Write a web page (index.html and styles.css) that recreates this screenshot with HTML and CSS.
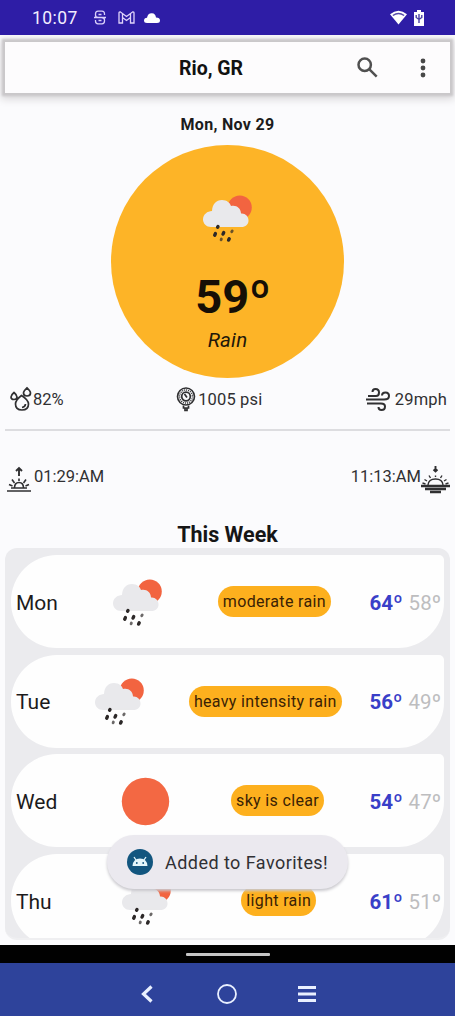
FILE: index.html
```html
<!DOCTYPE html>
<html lang="en">
<head>
<meta charset="utf-8">
<title>Weather</title>
<link rel="stylesheet" href="styles.css">
</head>
<body>
<svg class="defs" aria-hidden="true">
  <symbol id="rain" viewBox="0 0 50 48">
    <circle cx="36.8" cy="12.6" r="12" fill="#f26440"/>
    <path class="cloud" d="M8 32C3.500 32 0 28.500 0 24.500C0 19.500 4.500 16 9 16C9.500 9 13 5 19 5C24 5 27 8 28 11C33 9.500 38 13 38 18.500C42 18 45.500 21 45.500 25.500C45.500 29.500 42.500 32 38.500 32Z"/>
    <g stroke="#2d2928" stroke-width="3.400" stroke-linecap="round">
      <path d="M15 31.400l-.4 .8M12.400 38.600l-.7 1.600M20.700 37.600l-.7 1.500M26.200 43.800l-.6 1.300"/>
      <path stroke-width="2.800" opacity=".7" d="M29.200 36l-.5 .8M18.400 44l-.3 .9"/>
    </g>
  </symbol>
</svg>
<div class="phone">
  <header class="status">
    <span class="clock">10:07</span>
    <svg class="s-icon" viewBox="0 0 12 15"><path d="M10.500 5V4Q10.500 1.200 8 1.200H4Q1.500 1.200 1.500 4V5Q1.500 7.500 4.500 7.500H7.500Q10.500 7.500 10.500 10V11Q10.500 13.800 8 13.800H4Q1.500 13.800 1.500 11V10M0 7.500H12M4.500 4.500H7.500M4.500 10.500H7.500"/></svg>
    <svg class="m-icon" viewBox="0 0 17 13"><path d="M1 12V2Q1 .8 2.500 1L8.500 5.500L14.500 1Q16 .8 16 2V12H12.500V6.500L8.500 9.500L4.500 6.500V12ZM4.500 6.500V3M12.500 6.500V3"/></svg>
    <svg class="c-icon" viewBox="0 0 16 10"><path d="M3 10Q0 10 0 7.500Q0 5 3 4.700Q4 0 8 .3Q11.500 .5 12 4.500Q16 4.600 16 7.500Q16 10 13 10Z"/></svg>
    <span class="grow"></span>
    <svg class="wifi" viewBox="0 0 18 15"><path d="M0 4Q9-3.500 18 4L9 15Z" fill="#fff"/><path d="M3 5.400Q9 1 15 5.400" fill="none" stroke="#554aa8" stroke-width="1.500"/></svg>
    <svg class="battery" viewBox="0 0 10 16"><path d="M0 2H3V0H7V2H10V16H0Z" fill="#fff"/><path d="M5 13V4M2.200 5V7.500L5 9.500L7.800 7.500V5" fill="none" stroke="#4940a5" stroke-width="1.400"/></svg>
  </header>

  <div class="appbar">
    <h1 class="city">Rio, GR</h1>
    <svg class="search" viewBox="0 0 21 21"><circle cx="7.700" cy="7.700" r="6.200"/><path d="M12.200 12.200L19.700 19.700"/></svg>
    <svg class="dots" viewBox="0 0 6 20"><circle cx="3" cy="3" r="2.400"/><circle cx="3" cy="10" r="2.400"/><circle cx="3" cy="17" r="2.400"/></svg>
  </div>

  <main class="content">
    <p class="date">Mon, Nov 29</p>
    <section class="today">
      <svg class="today-icon"><use href="#rain"/></svg>
      <strong class="temp">59º</strong>
      <em class="summary">Rain</em>
    </section>

    <section class="stats">
      <div class="stat">
        <svg class="i-hum" viewBox="0 0 22 24"><path d="M11.500 8.500Q5.500 13 5.500 17Q5.500 23 12 23Q18.500 23 18.500 17Q18.500 13 11.500 8.500ZM17 .8Q13.500 4 13.500 6Q13.500 9 17 9Q20.500 9 20.500 6Q20.500 4 17 .8ZM4 5.500Q1 8 1 10Q1 12.500 4 12.500Q7 12.500 7 10Q7 8 4 5.500ZM15.500 17Q15.200 20 12 20.500"/></svg>
        <span class="v-hum">82%</span>
      </div>
      <div class="stat">
        <svg class="i-psi" viewBox="0 0 20 24"><circle cx="10" cy="9.500" r="8.500" stroke-width="1.600"/><circle cx="10" cy="9.500" r="6.500" stroke-width="1.500" stroke-dasharray="1 1"/><circle cx="10" cy="9.500" r="4.300"/><path d="M8.500 7L11 10.500M7.500 18.500V21H12.500V18.500M9 21V23.500H11V21" stroke-width="1.700"/></svg>
        <span class="v-psi">1005 psi</span>
      </div>
      <div class="stat">
        <svg class="i-wind" viewBox="0 0 24 24"><path d="M2 9H10Q13 9 13 5.500Q13 2 9.500 2Q6.500 2 6.500 5M0 12.500H18Q23 12.500 23 9Q23 5.500 19.500 5.500Q16 5.500 16 8.500M1 16.500H15Q19 16.500 19 19.500Q19 23 15.500 23Q12.500 23 12.500 20"/></svg>
        <span class="v-wind">29mph</span>
      </div>
    </section>
    <hr class="rule">
    <section class="sun">
      <div class="stat">
        <svg class="i-rise" viewBox="0 0 24 25"><path d="M12 9V1M9 4L12 1L15 4" stroke-width="1.900"/><path d="M0 24H24M4 21H20" stroke-width="1.400"/><path d="M7.500 21Q7.500 15.500 12 15.500Q16.500 15.500 16.500 21M12 14V11.500M7.500 16L5 12.500M16.500 16L19 12.500M5.500 19L2 17.500M18.500 19L22 17.500" stroke-width="1.600"/></svg>
        <span class="v-rise">01:29:AM</span>
      </div>
      <div class="stat">
        <span class="v-set">11:13:AM</span>
        <svg class="i-set" viewBox="0 0 29 28"><path d="M14.500 1V6M12.500 4.500L14.500 6.500L16.500 4.500" stroke-width="1.900"/><path d="M7 20Q7.500 14 14.500 14Q21.500 14 22 20M14.500 12V10.500M9.500 13L8 10.500M19.500 13L21 10.500M6 16L3.500 14.500M23 16L25.500 14.500M4.500 19L1.500 18M24.500 19L27.500 18" stroke-width="1.400"/><path d="M0 21H29M4 24H25M9 27H20" stroke-width="2.300"/></svg>
      </div>
    </section>

    <h2 class="week-title">This Week</h2>
    <section class="week">
      <article class="day"><span class="name">Mon</span><svg class="icon"><use href="#rain"/></svg><span class="pill">moderate rain</span><span class="range"><b class="hi">64º</b><span class="lo">58º</span></span></article>
      <article class="day"><span class="name">Tue</span><svg class="icon"><use href="#rain"/></svg><span class="pill">heavy intensity rain</span><span class="range"><b class="hi">56º</b><span class="lo">49º</span></span></article>
      <article class="day"><span class="name">Wed</span><svg class="icon" viewBox="0 0 50 48"><circle cx="25.500" cy="23.500" r="23.700" fill="#f36843"/></svg><span class="pill">sky is clear</span><span class="range"><b class="hi">54º</b><span class="lo">47º</span></span></article>
      <article class="day"><span class="name">Thu</span><svg class="icon"><use href="#rain"/></svg><span class="pill">light rain</span><span class="range"><b class="hi">61º</b><span class="lo">51º</span></span></article>
    </section>
  </main>

  <div class="gesture"><span class="handle"></span></div>
  <nav class="nav">
    <svg class="back" viewBox="0 0 12 18"><path d="M10.500 1.500L2.500 9L10.500 16.500"/></svg>
    <svg class="home" viewBox="0 0 20 20"><circle cx="10" cy="10" r="9"/></svg>
    <svg class="menu" viewBox="0 0 18 16"><path d="M0 1.500H18M0 8H18M0 14.500H18"/></svg>
  </nav>

  <div class="toast">
    <svg class="droid" viewBox="0 0 26 26"><circle cx="13" cy="13" r="13" fill="#12567f"/><path d="M5.500 17Q6 9.500 13 9.500Q20 9.500 20.500 17Z" fill="#e3f6fb"/><path d="M7 8L9 11M19 8L17 11" stroke="#e3f6fb" stroke-width="1.300"/><circle cx="9.800" cy="14" r=".9" fill="#12567f"/><circle cx="16.200" cy="14" r=".9" fill="#12567f"/></svg>
    <span class="toast-text">Added to Favorites!</span>
  </div>
</div>
</body>
</html>
```
FILE: styles.css
```css
* { box-sizing: border-box; }
body { margin: 0; font-family: Roboto, sans-serif; color: #1c1b1c; background: #fbfbfd; }
h1, h2, p { margin: 0; }
svg { display: block; flex: none; overflow: visible; }
.defs { position: absolute; width: 0; height: 0; }
.phone { position: relative; width: 455px; height: 1016px; overflow: hidden; display: flex; flex-direction: column; background: #fbfbfd; white-space: nowrap; }

.status { position: relative; z-index: 1; height: 35px; flex: none; display: flex; align-items: center; padding: 0 31px 0 32px; background: #2e1da6; color: #f2edff; }
.clock { width: 62px; font-size: 17.500px; letter-spacing: .45px; font-weight: 400; }
.s-icon { width: 12px; height: 15px; fill: none; stroke: #d9d0fa; stroke-width: 1.300; }
.m-icon { width: 17px; height: 13px; margin-left: 12px; fill: none; stroke: #e0d4fa; stroke-width: 1.300; }
.c-icon { width: 16px; height: 10px; margin-left: 9px; fill: #fff; }
.grow { flex: 1; }
.wifi { width: 17px; height: 15px; }
.battery { width: 10px; height: 16px; margin-left: 7px; }

.appbar { height: 51px; flex: none; margin: 7px 5px 0; padding: 0 24px 0 174px; display: flex; align-items: center; background: #fdfcfd; box-shadow: 0 0 2px 3px #cac8ca, 0 2px 8px 4px #d8d6d8; }
.city { flex: 1; font-size: 19.500px; font-weight: 700; color: #111; line-height: 24px; margin-top: 2px; }
.search { width: 21px; height: 21px; margin-right: 42px; fill: none; stroke: #505050; stroke-width: 2.500; }
.dots { width: 6px; height: 20px; fill: #484848; }

.content { height: 852px; flex: none; padding: 20px 5px 0; display: flex; flex-direction: column; }
.date { height: 22px; line-height: 24px; text-align: center; font-size: 16px; font-weight: 700; letter-spacing: .3px; }
.today { width: 233px; height: 233px; margin: 10px auto 0; padding-top: 50px; border-radius: 50%; background: #fdb427; display: flex; flex-direction: column; align-items: center; flex: none; }
.today-icon { width: 50px; height: 48px; }
.cloud { fill: #e9e9ec; }
.temp { font-size: 47px; line-height: 56px; margin: 26px 0 0 11px; color: #160f06; }
.summary { font-size: 20.500px; line-height: 24px; margin-top: 3px; letter-spacing: .2px; color: #21170a; }

.stats { height: 52px; padding: 8px 3px 0 5px; display: flex; justify-content: space-between; align-items: flex-start; }
.stat { display: flex; align-items: center; height: 26px; color: #303032; font-size: 16.500px; }
.stat svg { fill: none; stroke: #303032; stroke-width: 1.700; }
.i-hum { width: 22px; height: 24px; margin-right: 1px; }
.i-psi { width: 20px; height: 24px; margin: 0 2px 0 9px; }
.i-wind { width: 24px; height: 24px; margin-right: 5px; }
.stat .i-wind { stroke-width: 2; }
.v-psi, .v-wind { letter-spacing: .15px; }
.rule { width: 100%; height: 2px; flex: none; margin: -1px 0 0; border: 0; background: #dddde0; }
.sun { height: 90px; display: flex; justify-content: space-between; align-items: center; padding: 1px 0 0 2px; }
.i-rise { width: 24px; height: 25px; margin: 6px 3px 0 0; }
.i-set { width: 29px; height: 28px; margin: 5px 0 0 0; }
.week-title { height: 27px; line-height: 27px; text-align: center; font-size: 21.500px; color: #161616; }

.week { height: 392px; flex: none; padding: 7px 6px 0; display: flex; flex-direction: column; gap: 6.700px; overflow: hidden; border-radius: 12px; border-bottom: 2px solid #efeff1; background: #ebebee; }
.day { height: 93px; flex: none; display: flex; align-items: center; justify-content: space-between; padding: 2px 3px 0 5px; border-radius: 46px 5px 46px 46px; background: #fefefe; }
.name { font-size: 21px; }
.icon { width: 50px; height: 48px; margin: 0 16px 0 17px; }
.pill { height: 31px; line-height: 32px; border-radius: 16px; padding: 0 5px; margin-top: -2px; font-size: 16px; letter-spacing: .34px; background: #fdb01e; color: #3a2205; }
.range { display: flex; gap: 6px; font-size: 20.500px; }
.hi { color: #393fc8; letter-spacing: .1px; }
.lo { color: #bdbdbf; }

.gesture { height: 18px; flex: none; display: flex; justify-content: center; align-items: center; background: #010101; }
.handle { width: 84px; height: 3px; border-radius: 1px; background: #c5c5c5; }
.nav { height: 53px; flex: none; display: flex; align-items: center; justify-content: center; padding: 8px 0 0 1px; background: #2e439b; }
.nav svg { fill: none; stroke: #e9f0ff; }
.back { width: 12px; height: 18px; stroke-width: 3.200; }
.home { width: 20px; height: 20px; margin: 0 61px 0 64px; stroke-width: 1.800; }
.menu { width: 18px; height: 16px; stroke-width: 3; }

.toast { position: absolute; left: 107px; top: 835px; width: 241px; height: 54px; border-radius: 27px; display: flex; align-items: center; padding-left: 20px; background: #ebe9ef; box-shadow: 0 2px 3px #c9c8cd; }
.droid { width: 26px; height: 26px; margin-right: 12px; }
.toast-text { font-size: 18px; color: #303034; letter-spacing: .45px; }
```
